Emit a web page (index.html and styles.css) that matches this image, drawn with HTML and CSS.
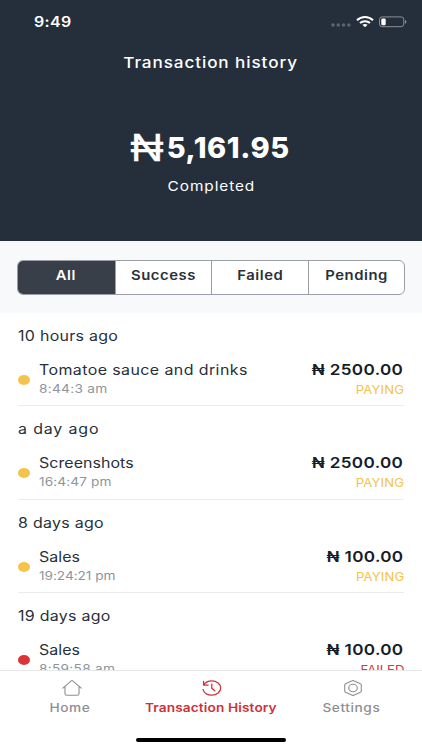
FILE: index.html
```html
<!DOCTYPE html>
<html lang="en">
<head>
<meta charset="utf-8">
<title>Transaction history</title>
<link rel="stylesheet" href="styles.css">
</head>
<body>
<div class="app">
  <header class="hero">
    <div class="status">
      <span class="clock wide-l">9:49</span>
      <div class="indicators">
        <svg class="dots" width="20" height="6" viewBox="0 0 20 6" fill="#5c646e"><circle cx="2" cy="3" r="1.8"/><circle cx="7.3" cy="3" r="1.8"/><circle cx="12.6" cy="3" r="1.8"/><circle cx="17.9" cy="3" r="1.8"/></svg>
        <svg width="18" height="12" viewBox="0 0 18 12" fill="none" stroke="#fff" stroke-width="2"><path d="M1 4.3C5.4-.1 12.6-.1 17 4.3"/><path d="M4 7c2.7-2.5 7.3-2.5 10 0"/><path d="M6.4 8.8c1.4-1.2 3.8-1.2 5.2 0L9 11.2z" fill="#fff" stroke="none"/></svg>
        <svg width="28" height="12" viewBox="0 0 28 12"><rect x=".5" y=".9" width="24.3" height="9.8" rx="2.6" fill="none" stroke="#87909a"/><rect x="2.3" y="2.4" width="4.4" height="6.9" rx="1.3" fill="#fff"/><path d="M26 4c1.8.4 1.8 3.3 0 3.7z" fill="#87909a"/></svg>
      </div>
    </div>
    <h1 class="title"><span class="wide-c">Transaction history</span></h1>
    <div class="total"><span class="naira">₦</span><span class="sum">5,161.95</span></div>
    <div class="state"><span class="wide-c">Completed</span></div>
  </header>

  <div class="filters">
    <div class="segments">
      <div class="segment active"><span class="wide-c">All</span></div>
      <div class="segment"><span class="wide-c">Success</span></div>
      <div class="segment"><span class="wide-c">Failed</span></div>
      <div class="segment"><span class="wide-c">Pending</span></div>
    </div>
  </div>

  <main class="list">
    <section class="group">
      <h2 class="when"><span class="wide-l">10 hours ago</span></h2>
      <div class="row">
        <i class="dot"></i>
        <div class="info"><div class="name wide-l">Tomatoe sauce and drinks</div><div class="time wide-l">8:44:3 am</div></div>
        <div class="amount"><div class="price wide-r">₦ 2500.00</div><div class="tag wide-r">PAYING</div></div>
      </div>
    </section>
    <section class="group">
      <h2 class="when roomy"><span class="wide-l">a day ago</span></h2>
      <div class="row">
        <i class="dot"></i>
        <div class="info"><div class="name tight wide-l">Screenshots</div><div class="time tight wide-l">16:4:47 pm</div></div>
        <div class="amount"><div class="price wide-r">₦ 2500.00</div><div class="tag wide-r">PAYING</div></div>
      </div>
    </section>
    <section class="group">
      <h2 class="when"><span class="wide-l">8 days ago</span></h2>
      <div class="row">
        <i class="dot"></i>
        <div class="info"><div class="name tight wide-l">Sales</div><div class="time tighter wide-l">19:24:21 pm</div></div>
        <div class="amount"><div class="price wide-r">₦ 100.00</div><div class="tag wide-r">PAYING</div></div>
      </div>
    </section>
    <section class="group failed">
      <h2 class="when"><span class="wide-l">19 days ago</span></h2>
      <div class="row">
        <i class="dot"></i>
        <div class="info"><div class="name tight wide-l">Sales</div><div class="time wide-l">8:59:58 am</div></div>
        <div class="amount"><div class="price wide-r">₦ 100.00</div><div class="tag wide-r">FAILED</div></div>
      </div>
    </section>
  </main>

  <footer class="bottom">
    <nav class="tabs">
      <a class="tab">
        <svg width="20" height="16" viewBox="0 0 20 16" fill="none" stroke="currentColor" stroke-width="1.1" stroke-linejoin="round" stroke-linecap="round"><path d="M.8 8.200 9.300.9q.7-.5 1.400 0l8.500 7.300M3 6.600v7.200q0 1.400 1.800 1.400h10.400q1.800 0 1.800-1.400V6.600"/></svg>
        <span class="wide-c">Home</span>
      </a>
      <a class="tab current">
        <svg width="20" height="16" viewBox="0 0 20 16" fill="none" stroke="currentColor" stroke-width="1.3" stroke-linejoin="round" stroke-linecap="round"><path d="M1.600 1.500v3.600h4.500M2 4.800C3.300 2.300 6.200.8 9.800.8c5 0 8.900 3.200 8.900 7.200s-3.900 7.200-8.900 7.200c-4.300 0-7.800-2.300-8.700-5.600M9.800 4.200v4.100l3 2.500"/></svg>
        <span class="wide-c">Transaction History</span>
      </a>
      <a class="tab">
        <svg width="20" height="16" viewBox="0 0 20 16" fill="none" stroke="currentColor" stroke-width="1.1" stroke-linejoin="round"><path d="M9.200.8q.8-.4 1.600 0l6.600 3q.9.4.9 1.200v6q0 .8-.9 1.200l-6.600 3q-.8.4-1.600 0l-6.600-3Q1.700 11.800 1.700 11V5q0-.8.9-1.200z"/><ellipse cx="10" cy="8" rx="4.300" ry="3.700"/></svg>
        <span class="wide-c">Settings</span>
      </a>
    </nav>
    <div class="home-bar"></div>
  </footer>
</div>
</body>
</html>
```
FILE: styles.css
```css
* { box-sizing: border-box; }
body { margin: 0; background: #fff; font-family: Inter, "Liberation Sans", sans-serif; color: #27303b; }
.app { width: 422px; height: 750px; display: flex; flex-direction: column; overflow: hidden; }

.wide-l, .wide-c, .wide-r { display: inline-block; white-space: nowrap; transform: scaleX(1.14); }
.wide-l { transform-origin: left; }
.wide-r { transform-origin: right; }

.hero { height: 241px; flex: none; background: #252f3b; color: #fff; text-align: center; }
.status { height: 42px; padding: 1px 15px 0 34px; display: flex; align-items: center; justify-content: space-between; }
.clock { font-size: 14px; font-weight: 600; letter-spacing: .3px; }
.indicators { display: flex; align-items: center; gap: 5px; }
.dots { margin-top: 7px; }
.title { margin: 11px 0 0; font-size: 15px; line-height: 20px; font-weight: 500; letter-spacing: .8px; }
.total { height: 40px; margin-top: 55px; display: flex; justify-content: center; align-items: center; }
.naira { font-family: "Liberation Sans", sans-serif; font-size: 38px; font-weight: 400; line-height: 40px; transform: scaleX(1.2); transform-origin: right; -webkit-text-stroke: .3px #fff; margin-left: 4px; }
.sum { margin-left: 3px; font-size: 29px; font-weight: 800; line-height: 40px; letter-spacing: .55px; }
.state { margin-top: 8px; font-size: 13.500px; line-height: 20px; letter-spacing: .8px; }

.filters { height: 72px; flex: none; background: #f8f9fb; padding: 19px 17px 18px; }
.segments { height: 35px; display: grid; grid-template-columns: repeat(4, 1fr); border: 1px solid #9b9fa5; border-radius: 6px; background: #fff; overflow: hidden; }
.segment { border-left: 1px solid #9b9fa5; text-align: center; font-size: 13px; line-height: 29px; font-weight: 600; letter-spacing: .5px; }
.segment:first-child { border-left: 0; }
.segment.active { background: #383f49; color: #fff; }

.list { height: 357px; flex: none; overflow: hidden; padding: 0 18px; }
.group { height: 93.300px; border-bottom: 1px solid #e9ecee; }
.when { margin: 0; padding-top: 13px; font-size: 14px; line-height: 20px; font-weight: 400; letter-spacing: .25px; }
.when.roomy { letter-spacing: .75px; }
.row { display: flex; margin-top: 14px; }
.dot { width: 12px; height: 10px; margin: 15px 9px 0 0; border-radius: 50%; background: #f4c349; }
.info { flex: 1; }
.name, .time, .price, .tag { display: block; }
.name { font-size: 14px; line-height: 20px; letter-spacing: .36px; }
.name.tight { letter-spacing: .05px; }
.time { font-size: 12px; line-height: 17px; color: #90959b; letter-spacing: .25px; }
.time.tight { letter-spacing: .08px; }
.time.tighter { letter-spacing: -.05px; }
.amount { text-align: right; }
.price { font-size: 15px; line-height: 20px; font-weight: 600; color: #151d29; letter-spacing: .3px; margin-right: 1px; }
.tag { font-size: 11.500px; line-height: 20px; color: #f4c349; letter-spacing: .15px; }
.failed .dot { background: #db3338; }
.failed .tag { color: #db3338; letter-spacing: 0; }

.bottom { height: 80px; flex: none; background: #fff; border-top: 1px solid #e5e7e9; }
.tabs { display: grid; grid-template-columns: repeat(3, 1fr); height: 67px; padding-top: 9px; }
.tab { display: flex; flex-direction: column; align-items: center; color: #8c8f94; font-size: 12px; line-height: 16px; font-weight: 500; letter-spacing: .5px; gap: 4px; }
.tab svg { margin-left: 3px; }
.tab.current { color: #d13136; font-weight: 600; letter-spacing: .1px; }
.home-bar { width: 150px; height: 4px; margin: 0 auto; border-radius: 2px; background: #000; }
```
